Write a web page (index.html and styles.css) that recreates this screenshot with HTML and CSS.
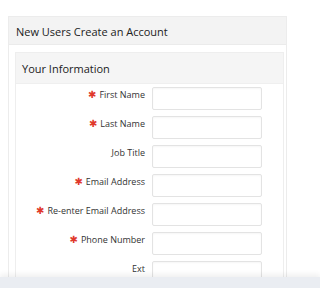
FILE: index.html
```html
<!DOCTYPE html>
<html>
<head>
<meta charset="utf-8">
<link rel="stylesheet" href="styles.css">
</head>
<body>
<div class="panel">
  <div class="panel-head">New Users Create an Account</div>
  <div class="panel-body">
    <div class="card">
      <div class="card-head">Your Information</div>
      <div class="card-body">
        <div class="row"><label class="lbl"><span class="req">✱</span>First Name</label><div class="field"></div></div>
        <div class="row"><label class="lbl"><span class="req">✱</span>Last Name</label><div class="field"></div></div>
        <div class="row"><label class="lbl">Job Title</label><div class="field"></div></div>
        <div class="row"><label class="lbl"><span class="req">✱</span>Email Address</label><div class="field"></div></div>
        <div class="row"><label class="lbl"><span class="req">✱</span>Re-enter Email Address</label><div class="field"></div></div>
        <div class="row"><label class="lbl"><span class="req">✱</span>Phone Number</label><div class="field"></div></div>
        <div class="row"><label class="lbl">Ext</label><div class="field"></div></div>
      </div>
    </div>
  </div>
</div>
<div class="footer"></div>
</body>
</html>
```
FILE: styles.css
```css
html, body {
  margin: 0;
  padding: 0;
  background: #fff;
  overflow: hidden;
  height: 288px;
}
body {
  font-family: "Open Sans", "Liberation Sans", sans-serif;
  color: #333;
  padding: 16px 0 0 8px;
  box-sizing: border-box;
}
.panel {
  width: 277px;
  border: 1px solid #ececec;
  border-bottom: none;
}
.panel-head {
  background: #f3f3f3;
  height: 27px;
  line-height: 29px;
  padding-left: 7px;
  font-size: 11px;
  color: #222;
  border-bottom: 1px solid #ebebeb;
}
.panel-body {
  padding: 7px 2px 0 6px;
}
.card {
  width: 267px;
  border: 1px solid #eeeeee;
  border-bottom: none;
}
.card-head {
  background: #f5f5f5;
  height: 30px;
  line-height: 32px;
  padding-left: 6px;
  font-size: 11px;
  color: #222;
  border-bottom: 1px solid #efefef;
}
.card-body {
  padding-top: 3px;
  display: flex;
  flex-direction: column;
  gap: 6px;
}
.row {
  display: grid;
  grid-template-columns: 129px 110px;
  column-gap: 7px;
  align-items: start;
}
.lbl {
  text-align: right;
  font-size: 9px;
  line-height: 15px;
  color: #333;
  white-space: nowrap;
}
.req {
  color: #e0392c;
  font-family: "DejaVu Sans", sans-serif;
  font-size: 10px;
  margin-right: 3px;
  position: relative;
  top: -0.5px;
}
.field {
  height: 21px;
  border: 1px solid #e3e3e3;
  border-radius: 2px;
  background: #fff;
  box-shadow: inset 0 1px 2px rgba(0,0,0,0.04);
}
.footer {
  position: fixed;
  left: 0;
  right: 0;
  bottom: 0;
  height: 11px;
  background: #eaedf2;
  box-shadow: 0 -3px 5px rgba(0,0,0,0.06);
}
```
